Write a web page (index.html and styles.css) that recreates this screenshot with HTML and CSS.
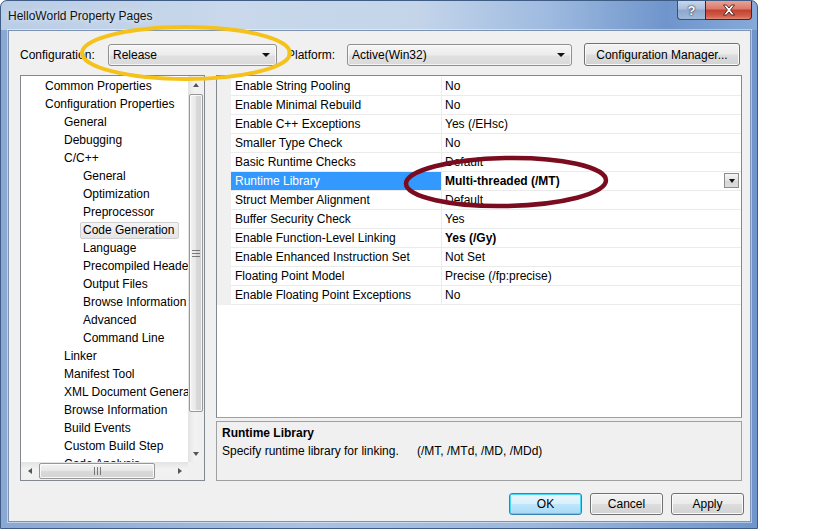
FILE: index.html
```html
<!DOCTYPE html>
<html>
<head>
<meta charset="utf-8">
<title>HelloWorld Property Pages</title>
<link rel="stylesheet" href="styles.css">
</head>
<body>
<div class="window">
  <div class="titlebar">
    <span class="title">HelloWorld Property Pages</span>
    <div class="caption-btns">
      <div class="cap cap-help">?</div>
      <div class="cap cap-close">
        <svg width="14" height="12" viewBox="0 0 14 12"><path d="M1.5 1 L4.5 1 L7 4 L9.5 1 L12.5 1 L8.6 6 L12.5 11 L9.5 11 L7 8 L4.5 11 L1.5 11 L5.4 6 Z" fill="#fff" stroke="#4a1a14" stroke-width="0.9" stroke-linejoin="round"/></svg>
      </div>
    </div>
  </div>
  <div class="client">
    <div class="toprow">
      <span class="lbl lbl-config">Configuration:</span>
      <div class="combo combo-config"><span>Release</span><span class="arrow"></span></div>
      <span class="lbl lbl-platform">Platform:</span>
      <div class="combo combo-platform"><span>Active(Win32)</span><span class="arrow"></span></div>
      <div class="btn btn-cfgmgr">Configuration Manager...</div>
    </div>
    <div class="main">
      <div class="tree">
        <div class="tree-view">
          <div class="node l0">Common Properties</div>
          <div class="node l0">Configuration Properties</div>
          <div class="node l1">General</div>
          <div class="node l1">Debugging</div>
          <div class="node l1">C/C++</div>
          <div class="node l2">General</div>
          <div class="node l2">Optimization</div>
          <div class="node l2">Preprocessor</div>
          <div class="node l2"><span class="sel">Code Generation</span></div>
          <div class="node l2">Language</div>
          <div class="node l2">Precompiled Headers</div>
          <div class="node l2">Output Files</div>
          <div class="node l2">Browse Information</div>
          <div class="node l2">Advanced</div>
          <div class="node l2">Command Line</div>
          <div class="node l1">Linker</div>
          <div class="node l1">Manifest Tool</div>
          <div class="node l1">XML Document Generator</div>
          <div class="node l1">Browse Information</div>
          <div class="node l1">Build Events</div>
          <div class="node l1">Custom Build Step</div>
          <div class="node l1">Code Analysis</div>
        </div>
        <div class="vscroll">
          <div class="sb-btn"><span class="tri tri-up"></span></div>
          <div class="vthumb"><span class="grip-h"></span></div>
          <div class="sb-fill"></div>
          <div class="sb-btn"><span class="tri tri-down"></span></div>
        </div>
        <div class="hscroll">
          <div class="sb-btn-h"><span class="tri tri-left"></span></div>
          <div class="hthumb"><span class="grip-v"></span></div>
          <div class="sb-fill"></div>
          <div class="sb-btn-h"><span class="tri tri-right"></span></div>
        </div>
        <div class="corner"></div>
      </div>
      <div class="props">
        <div class="grid">
          <div class="gutter"></div>
          <div class="rows">
            <div class="row"><div class="name">Enable String Pooling</div><div class="value">No</div></div>
            <div class="row"><div class="name">Enable Minimal Rebuild</div><div class="value">No</div></div>
            <div class="row"><div class="name">Enable C++ Exceptions</div><div class="value">Yes (/EHsc)</div></div>
            <div class="row"><div class="name">Smaller Type Check</div><div class="value">No</div></div>
            <div class="row"><div class="name">Basic Runtime Checks</div><div class="value">Default</div></div>
            <div class="row row-selected"><div class="name">Runtime Library</div><div class="value bold">Multi-threaded (/MT)<span class="dd"><span class="tri tri-down tri-small"></span></span></div></div>
            <div class="row"><div class="name">Struct Member Alignment</div><div class="value">Default</div></div>
            <div class="row"><div class="name">Buffer Security Check</div><div class="value">Yes</div></div>
            <div class="row"><div class="name">Enable Function-Level Linking</div><div class="value bold">Yes (/Gy)</div></div>
            <div class="row"><div class="name">Enable Enhanced Instruction Set</div><div class="value">Not Set</div></div>
            <div class="row"><div class="name">Floating Point Model</div><div class="value">Precise (/fp:precise)</div></div>
            <div class="row"><div class="name">Enable Floating Point Exceptions</div><div class="value">No</div></div>
          </div>
        </div>
        <div class="desc">
          <div class="desc-title">Runtime Library</div>
          <div class="desc-text"><span class="desc-main">Specify runtime library for linking.</span><span>(/MT, /MTd, /MD, /MDd)</span></div>
        </div>
      </div>
    </div>
    <div class="buttons">
      <div class="btn btn-dlg btn-ok">OK</div>
      <div class="btn btn-dlg">Cancel</div>
      <div class="btn btn-dlg">Apply</div>
    </div>
  </div>
  <svg class="ring ring-yellow" width="240" height="76" viewBox="0 0 240 76"><ellipse cx="116" cy="38" rx="104" ry="26" fill="none" stroke="#f4c21b" stroke-width="4"/></svg>
  <svg class="ring ring-red" width="215" height="62" viewBox="0 0 215 62"><ellipse cx="106" cy="30" rx="100" ry="24" fill="none" stroke="#7b0b1f" stroke-width="4.5" transform="rotate(-1 106 30)"/></svg>
</div>
</body>
</html>
```
FILE: styles.css
```css
* { box-sizing: border-box; }
html, body { margin: 0; padding: 0; background: #fff; }
body {
  font-family: "Liberation Sans", Arial, sans-serif;
  font-size: 12px;
  color: #000;
}

.window {
  position: relative;
  width: 758px;
  height: 529px;
  border: 1px solid #3f5c84;
  border-radius: 7px 7px 0 0;
  background:
    linear-gradient(to right, #b9cde6 0%, #c9d8eb 30%, #c4d5ea 55%, #9fbbe0 72%, #6f95cc 88%, #86a9d8 100%) top / 100% 29px no-repeat,
    linear-gradient(to right, #8aa8d2 0%, #a9c1e2 40%, #9cb8de 70%, #6f95cc 100%);
  display: flex;
  flex-direction: column;
  padding: 0 6px 6px 7px;
}

.titlebar {
  height: 29px;
  display: flex;
  align-items: flex-start;
}
.title {
  line-height: 30px;
  color: #111;
  text-shadow: 0 0 6px rgba(255,255,255,0.9);
}
.caption-btns {
  margin-left: auto;
  margin-right: -1px;
  display: flex;
}
.cap {
  height: 19px;
  border: 1px solid #3d4f6c;
  border-top: none;
  display: flex;
  align-items: center;
  justify-content: center;
}
.cap-help {
  width: 28px;
  border-right: none;
  border-radius: 0 0 0 4px;
  background: linear-gradient(#c7d6ea 0%, #a9bfdd 45%, #8ea8cd 50%, #9fb8da 100%);
  color: #fff;
  font-weight: bold;
  font-size: 13px;
  text-shadow: 0 0 2px #223, 0 0 1px #223;
}
.cap-close {
  width: 47px;
  border-color: #5a1d16;
  border-radius: 0 0 4px 0;
  background: linear-gradient(#e8a294 0%, #d9786a 45%, #c4402f 50%, #d0604d 85%, #e28a74 100%);
}

.client {
  flex: 1;
  background: #f0f0f0;
  border: 1px solid #7d93b3;
  box-shadow: 0 0 0 1px rgba(255,255,255,0.45);
  padding: 12px 8px 6px 11px;
  display: flex;
  flex-direction: column;
}

.toprow {
  height: 23px;
  display: flex;
  align-items: center;
}
.lbl-config { width: 88px; }
.lbl-platform { width: 60px; margin-left: 10px; }
.combo {
  height: 22px;
  border: 1px solid #8f8f8f;
  border-radius: 3px;
  background: linear-gradient(#f6f6f6 0%, #ececec 50%, #e0e0e0 55%, #dadada 100%);
  box-shadow: inset 0 0 0 1px rgba(255,255,255,0.7);
  display: flex;
  align-items: center;
  padding-left: 4px;
}
.combo-config { width: 169px; }
.combo-platform { width: 225px; }
.arrow {
  margin-left: auto;
  margin-right: 6px;
  width: 0;
  height: 0;
  border-left: 4px solid transparent;
  border-right: 4px solid transparent;
  border-top: 4px solid #111;
}

.btn {
  height: 23px;
  border: 1px solid #707070;
  border-radius: 3px;
  background: linear-gradient(#f3f3f3 0%, #ebebeb 48%, #dddddd 52%, #d2d2d2 100%);
  box-shadow: inset 0 0 0 1px #fbfbfb;
  display: flex;
  align-items: center;
  justify-content: center;
}
.btn-cfgmgr {
  width: 156px;
  margin-left: auto;
  margin-right: 2px;
}

.main {
  margin-top: 9px;
  height: 406px;
  display: flex;
  gap: 11px;
}

.tree {
  width: 185px;
  border: 1px solid #828790;
  background: #fff;
  display: grid;
  grid-template-columns: 167px 16px;
  grid-template-rows: 386px 18px;
}
.tree-view {
  overflow: hidden;
  padding-top: 1px;
}
.node {
  height: 18px;
  line-height: 18px;
  white-space: nowrap;
}
.l0 { padding-left: 24px; }
.l1 { padding-left: 43px; }
.l2 { padding-left: 62px; }
.sel {
  display: inline-block;
  height: 17px;
  line-height: 15px;
  margin-left: -3px;
  padding: 0 4px 0 2px;
  border: 1px solid #d0d0d0;
  border-radius: 2px;
  background: linear-gradient(#f4f4f4, #e4e4e4);
}

.vscroll {
  display: flex;
  flex-direction: column;
  background: linear-gradient(to right, #e3e3e3, #f2f2f2 40%, #f0f0f0);
}
.sb-btn { height: 17px; display: flex; align-items: center; justify-content: center; }
.sb-btn-h { width: 17px; display: flex; align-items: center; justify-content: center; }
.sb-fill { flex: 1; }
.vthumb {
  height: 318px;
  margin: 1px 1px 0 1px;
  border: 1px solid #979797;
  border-radius: 2px;
  background: linear-gradient(to right, #f2f2f2, #e9e9e9 45%, #d8d8d8 55%, #d4d4d4);
  box-shadow: inset 0 0 0 1px rgba(255,255,255,0.8);
  display: flex;
  align-items: center;
  justify-content: center;
}
.grip-h {
  width: 8px;
  height: 7px;
  background: repeating-linear-gradient(#555 0 1px, transparent 1px 3px);
  opacity: 0.75;
}
.hscroll {
  display: flex;
  background: linear-gradient(#e3e3e3, #f2f2f2 40%, #f0f0f0);
}
.hthumb {
  width: 116px;
  margin: 1px 0 1px 1px;
  border: 1px solid #979797;
  border-radius: 2px;
  background: linear-gradient(#f2f2f2, #e9e9e9 45%, #d8d8d8 55%, #d4d4d4);
  box-shadow: inset 0 0 0 1px rgba(255,255,255,0.8);
  display: flex;
  align-items: center;
  justify-content: center;
}
.grip-v {
  width: 7px;
  height: 8px;
  background: repeating-linear-gradient(to right, #555 0 1px, transparent 1px 3px);
  opacity: 0.75;
}
.corner { background: #f0f0f0; }

.tri { width: 0; height: 0; display: block; }
.tri-up { border-left: 3.5px solid transparent; border-right: 3.5px solid transparent; border-bottom: 4px solid #555; }
.tri-down { border-left: 3.5px solid transparent; border-right: 3.5px solid transparent; border-top: 4px solid #555; }
.tri-left { border-top: 3.5px solid transparent; border-bottom: 3.5px solid transparent; border-right: 4px solid #555; }
.tri-right { border-top: 3.5px solid transparent; border-bottom: 3.5px solid transparent; border-left: 4px solid #555; }
.tri-small { border-top-color: #111; }

.props {
  flex: 1;
  display: flex;
  flex-direction: column;
  gap: 3px;
}
.grid {
  height: 343px;
  border: 1px solid #828790;
  border-bottom-color: #a0a0a0;
  background: #fff;
  padding-top: 1px;
  display: flex;
  align-items: flex-start;
}
.gutter {
  width: 14px;
  height: 228px;
  background: #f0f0f0;
}
.rows { flex: 1; }
.row {
  height: 19px;
  display: flex;
  border-bottom: 1px solid #ebebeb;
}
.name {
  width: 211px;
  border-right: 1px solid #ebebeb;
  padding-left: 4px;
  line-height: 18px;
  white-space: nowrap;
}
.value {
  flex: 1;
  padding-left: 3px;
  line-height: 18px;
  display: flex;
  white-space: nowrap;
}
.bold { font-weight: bold; }
.row-selected .name {
  background: #3399ff;
  color: #fff;
}
.dd {
  margin-left: auto;
  margin-top: 1px;
  margin-right: 2px;
  width: 15px;
  height: 15px;
  border: 1px solid #8c8c8c;
  background: linear-gradient(#f6f6f6, #e2e2e2 50%, #d6d6d6 51%, #dcdcdc);
  display: flex;
  align-items: center;
  justify-content: center;
}

.desc {
  flex: 1;
  border: 1px solid #a0a0a0;
  background: #f0f0f0;
  padding: 2px 5px;
}
.desc-title { font-weight: bold; line-height: 18px; }
.desc-text { line-height: 18px; white-space: nowrap; }
.desc-main { display: inline-block; width: 195px; }

.buttons {
  margin-top: 12px;
  margin-right: -2px;
  display: flex;
  justify-content: flex-end;
  gap: 8px;
}
.btn-dlg {
  width: 73px;
  height: 22px;
}
.btn-ok {
  border-color: #3c7fb1;
  background: linear-gradient(#eaf6fd 0%, #d9f0fc 48%, #bee6fd 52%, #a7d9f5 100%);
  box-shadow: inset 0 0 0 1px #48d8fb;
}

.ring { position: absolute; pointer-events: none; }
.ring-yellow { left: 69px; top: 14px; }
.ring-red { left: 399px; top: 151px; }
```
